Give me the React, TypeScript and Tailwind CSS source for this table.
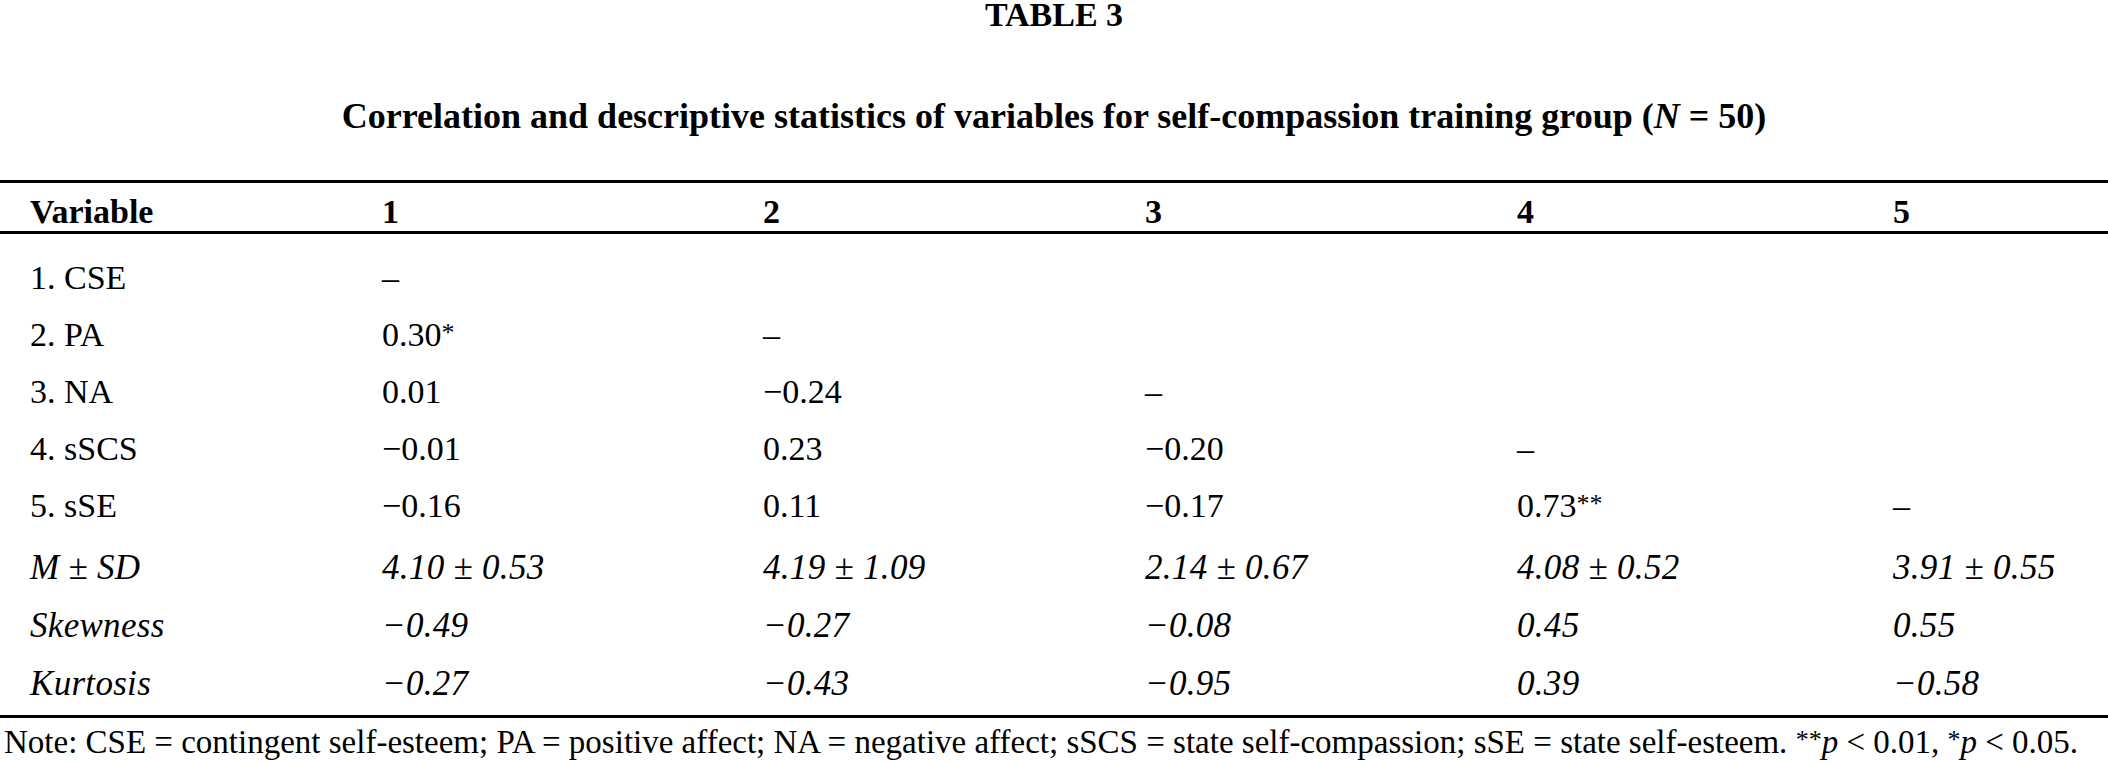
import React from 'react';

const serif = { fontFamily: '"Liberation Serif", "Times New Roman", serif' };

type Row = { label: string; stat?: boolean; cells: string[] };

const rows: Row[] = [
  { label: '1. CSE', cells: ['–'] },
  { label: '2. PA', cells: ['0.30*', '–'] },
  { label: '3. NA', cells: ['0.01', '−0.24', '–'] },
  { label: '4. sSCS', cells: ['−0.01', '0.23', '−0.20', '–'] },
  { label: '5. sSE', cells: ['−0.16', '0.11', '−0.17', '0.73**', '–'] },
  { label: 'M ± SD', stat: true, cells: ['4.10 ± 0.53', '4.19 ± 1.09', '2.14 ± 0.67', '4.08 ± 0.52', '3.91 ± 0.55'] },
  { label: 'Skewness', stat: true, cells: ['−0.49', '−0.27', '−0.08', '0.45', '0.55'] },
  { label: 'Kurtosis', stat: true, cells: ['−0.27', '−0.43', '−0.95', '0.39', '−0.58'] },
];

const cols = 'grid grid-cols-[382px_381px_382px_372px_376px_1fr]';

// significance stars sit small and high, like a superscript
const Star = ({ n }: { n: number }) => (
  <span className="relative -top-[5px] text-[26px]">{'*'.repeat(n)}</span>
);

function Cell({ text }: { text: string }) {
  const m = text.match(/^(.*?)(\*+)$/);
  if (!m) return <div>{text}</div>;
  return (
    <div>
      {m[1]}
      <Star n={m[2].length} />
    </div>
  );
}

export default function App() {
  return (
    <div className="w-[2108px] bg-white text-black" style={serif}>
      <div className="text-center text-[34px] leading-[30px] font-bold">TABLE 3</div>
      <div className="mt-[66px] text-center text-[36px] leading-[41px] font-bold">
        Correlation and descriptive statistics of variables for self-compassion training group (<i>N</i> = 50)
      </div>

      <div className="mt-[43px] border-t-[3px] border-black">
        <div className={`${cols} h-[48px] pt-[12px] text-[34px] leading-[34px] font-bold`}>
          <div className="pl-[30px]">Variable</div>
          <div>1</div>
          <div>2</div>
          <div>3</div>
          <div>4</div>
          <div>5</div>
        </div>
      </div>

      <div className="border-t-[3px] border-black pt-[16px] border-b-[3px]">
        {rows.map((r, idx) => (
          <div
            key={r.label}
            className={`${cols} items-center ${
              r.stat ? 'h-[58px] italic text-[35px] tracking-[0.3px]' : 'h-[57px] text-[34px]'
            } ${idx === 5 ? 'mt-[6px]' : ''}`}
          >
            <div className="pl-[30px]">{r.label}</div>
            {[0, 1, 2, 3, 4].map((i) => (
              <Cell key={i} text={r.cells[i] ?? ''} />
            ))}
            <div />
          </div>
        ))}
      </div>

      <div className="pl-[4px] pt-[4px] text-[33px] leading-[40px] whitespace-nowrap">
        Note: CSE = contingent self-esteem; PA = positive affect; NA = negative affect; sSCS = state self-compassion; sSE = state
        self-esteem. <Star n={2} />
        <i>p</i> &lt; 0.01, <Star n={1} />
        <i>p</i> &lt; 0.05.
      </div>
    </div>
  );
}
